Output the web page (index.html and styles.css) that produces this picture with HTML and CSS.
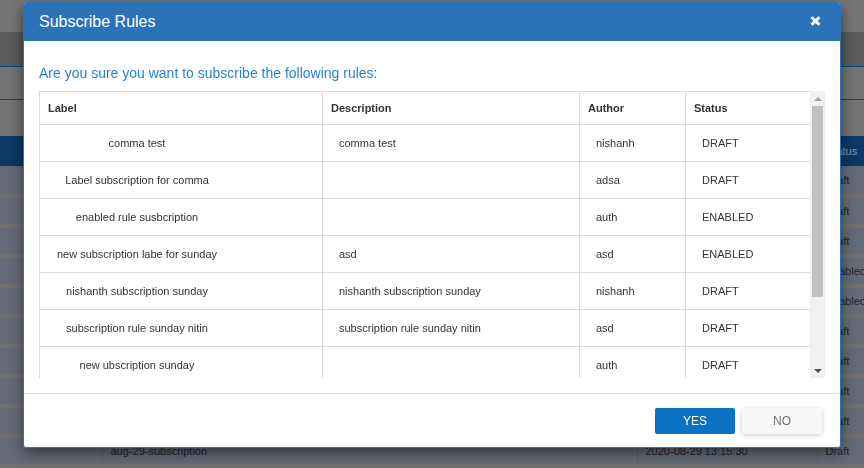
FILE: index.html
```html
<!DOCTYPE html>
<html lang="en">
<head>
<meta charset="utf-8">
<title>Subscribe Rules</title>
<link rel="stylesheet" href="styles.css">
</head>
<body>
<div class="page">
  <div class="topbar"></div>
  <div class="nav"></div>
  <div class="toolbar"></div>
  <div class="filters"></div>
  <table class="grid">
    <colgroup><col class="g-check"><col class="g-name"><col class="g-date"><col class="g-status"></colgroup>
    <thead>
      <tr><th></th><th></th><th></th><th>Status</th></tr>
    </thead>
    <tbody>
      <tr><td></td><td></td><td></td><td>Draft</td></tr>
      <tr><td></td><td></td><td></td><td>Draft</td></tr>
      <tr><td></td><td></td><td></td><td>Draft</td></tr>
      <tr><td></td><td></td><td></td><td>Enabled</td></tr>
      <tr><td></td><td></td><td></td><td>Enabled</td></tr>
      <tr><td></td><td></td><td></td><td>Draft</td></tr>
      <tr><td></td><td></td><td></td><td>Draft</td></tr>
      <tr><td></td><td></td><td></td><td>Draft</td></tr>
      <tr><td></td><td></td><td></td><td>Draft</td></tr>
      <tr><td></td><td>aug-29-subscription</td><td>2020-08-29 13:15:30</td><td>Draft</td></tr>
    </tbody>
  </table>
</div>

<div class="modal">
  <div class="modal-header">
    <h3 class="modal-title">Subscribe Rules</h3>
    <button class="close" aria-label="Close">
      <svg width="11" height="10" viewBox="0 0 11 10"><path d="M1.6 1.2 L9.4 8.8 M9.4 1.2 L1.6 8.8" stroke="#fff" stroke-width="3" fill="none"/></svg>
    </button>
  </div>
  <div class="modal-body">
    <h4 class="question">Are you sure you want to subscribe the following rules:</h4>
    <div class="rules">
      <div class="rules-view">
        <table class="rules-table">
          <colgroup><col class="r-label"><col class="r-desc"><col class="r-author"><col class="r-status"></colgroup>
          <thead>
            <tr><th>Label</th><th>Description</th><th>Author</th><th>Status</th></tr>
          </thead>
          <tbody>
            <tr><td><div class="lbl">comma test</div></td><td class="pad">comma test</td><td class="pad">nishanh</td><td class="pad">DRAFT</td></tr>
            <tr><td><div class="lbl">Label subscription for comma</div></td><td class="pad"></td><td class="pad">adsa</td><td class="pad">DRAFT</td></tr>
            <tr><td><div class="lbl">enabled rule susbcription</div></td><td class="pad"></td><td class="pad">auth</td><td class="pad">ENABLED</td></tr>
            <tr><td><div class="lbl">new subscription labe for sunday</div></td><td class="pad">asd</td><td class="pad">asd</td><td class="pad">ENABLED</td></tr>
            <tr><td><div class="lbl">nishanth subscription sunday</div></td><td class="pad">nishanth subscription sunday</td><td class="pad">nishanh</td><td class="pad">DRAFT</td></tr>
            <tr><td><div class="lbl">subscription rule sunday nitin</div></td><td class="pad">subscription rule sunday nitin</td><td class="pad">asd</td><td class="pad">DRAFT</td></tr>
            <tr><td><div class="lbl">new ubscription sunday</div></td><td class="pad"></td><td class="pad">auth</td><td class="pad">DRAFT</td></tr>
          </tbody>
        </table>
      </div>
      <div class="vscroll">
        <div class="arrow"><span class="tri-up"></span></div>
        <div class="thumb"></div>
        <div class="track-rest"></div>
        <div class="arrow"><span class="tri-down"></span></div>
      </div>
    </div>
  </div>
  <div class="modal-footer">
    <button class="btn btn-yes">YES</button>
    <button class="btn btn-no">NO</button>
  </div>
</div>
</body>
</html>
```

FILE: styles.css
```css
* { box-sizing: border-box; }

html, body {
  margin: 0;
  padding: 0;
  width: 864px;
  height: 468px;
  overflow: hidden;
  font-family: "Liberation Sans", Arial, sans-serif;
}

/* ---------- dimmed page behind the dialog ---------- */
.page {
  width: 864px;
  height: 468px;
  background: #666c77;
  display: flex;
  flex-direction: column;
}
.topbar { height: 32px; flex: none; background: #767676; }
.nav { height: 34px; flex: none; background: #5c5c5c; }
.toolbar { height: 33px; flex: none; background: #757575; border-top: 1px solid #0d4a7c; }
.filters { height: 37px; flex: none; background: #737373; border-top: 1px solid #0d4a7c; }

.grid {
  width: 864px;
  border-collapse: collapse;
  table-layout: fixed;
  font-size: 11px;
}
.g-check { width: 102px; }
.g-name { width: 535px; }
.g-date { width: 180px; }
.g-status { width: 47px; }
.grid th {
  height: 30px;
  background: #0b3a67;
  color: #7f9bb8;
  font-weight: normal;
  text-align: left;
  padding: 0 0 0 9px;
  font-size: 11px;
}
.grid td {
  height: 30px;
  padding: 0 0 0 8px;
  color: #1e2430;
  white-space: nowrap;
  overflow: hidden;
  border-bottom: 4px solid #737170;
  border-right: 1px solid #5e636c;
  background: #666c77;
}
.grid td:last-child { border-right: 0; }

/* ---------- dialog ---------- */
.modal {
  position: fixed;
  left: 23px;
  top: 2px;
  width: 818px;
  height: 446px;
  background: #fff;
  border: 1px solid #2b72b8;
  border-radius: 3px;
  box-shadow: 0 5px 15px rgba(0, 0, 0, 0.5);
  display: flex;
  flex-direction: column;
}
.modal-header {
  height: 38px;
  background: #2b73b9;
  display: flex;
  align-items: center;
  justify-content: space-between;
  padding: 0 19px 0 15px;
  border-radius: 2px 2px 0 0;
}
.modal-title {
  margin: 0;
  font-size: 16px;
  font-weight: normal;
  color: #fff;
  line-height: 20px;
}
.close {
  background: none;
  border: 0;
  padding: 0;
  width: 11px;
  height: 10px;
  display: flex;
  margin-top: -2px;
}

.modal-body {
  padding: 15px 15px 15px 15px;
  border-bottom: 1px solid #e2e2e2;
}
.question {
  margin: 7px 0 8px;
  font-size: 14px;
  line-height: 20px;
  font-weight: normal;
  color: #1f84d6;
}

.rules {
  display: flex;
  height: 287px;
}
.rules-view {
  width: 772px;
  height: 287px;
  overflow: hidden;
}
.rules-table {
  width: 772px;
  border-collapse: collapse;
  table-layout: fixed;
  font-size: 11px;
  color: #333;
}
.r-label { width: 283px; }
.r-desc { width: 257px; }
.r-author { width: 106px; }
.r-status { width: 126px; }
.rules-table th,
.rules-table td {
  border: 1px solid #dcdcdc;
}
.rules-table th {
  height: 33px;
  text-align: left;
  font-weight: bold;
  padding: 0 8px;
  color: #333;
}
.rules-table td {
  height: 37px;
  padding: 0 8px 0 7px;
  white-space: nowrap;
  overflow: hidden;
}
.rules-table td.pad { padding-left: 16px; }
.lbl {
  width: 180px;
  text-align: center;
}

.vscroll {
  width: 15px;
  background: #f1f1f1;
  display: flex;
  flex-direction: column;
}
.arrow {
  height: 15px;
  display: flex;
  align-items: center;
  justify-content: center;
}
.tri-up {
  width: 0;
  height: 0;
  border-left: 4px solid transparent;
  border-right: 4px solid transparent;
  border-bottom: 4px solid #a3a3a3;
}
.tri-down {
  width: 0;
  height: 0;
  border-left: 4px solid transparent;
  border-right: 4px solid transparent;
  border-top: 4px solid #505050;
}
.thumb {
  height: 191px;
  margin: 0 2px;
  background: #c1c1c1;
}
.track-rest { flex: 1; }

.modal-footer {
  flex: 1;
  display: flex;
  justify-content: flex-end;
  align-items: flex-start;
  gap: 7px;
  padding: 14px 18px 0 0;
}
.btn {
  width: 80px;
  height: 26px;
  border: 0;
  border-radius: 2px;
  font-family: "Liberation Sans", Arial, sans-serif;
  font-size: 12px;
  padding: 0;
}
.btn-yes {
  background: #0b71c4;
  color: #fff;
}
.btn-no {
  background: #f8f8f8;
  color: #707070;
  box-shadow: 0 1px 4px rgba(0, 0, 0, 0.22);
}
```
